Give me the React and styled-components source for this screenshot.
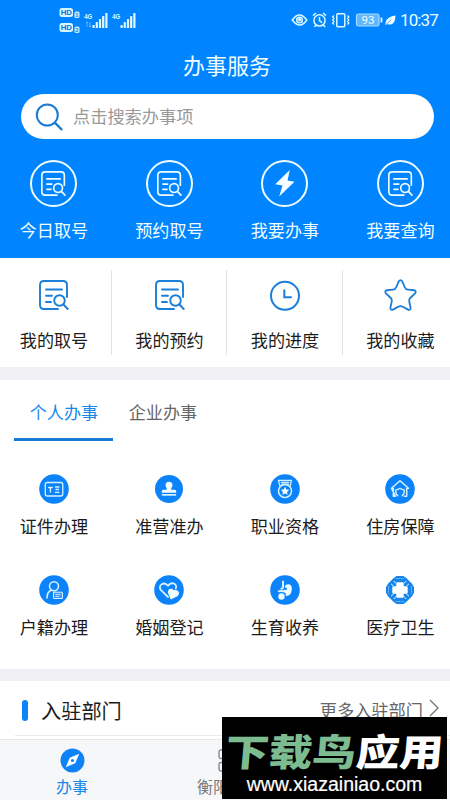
import styled, { createGlobalStyle } from "styled-components";

const GlobalStyle = createGlobalStyle`
    * {
        box-sizing: border-box;
    }

    body {
        margin: 0;
        overflow: hidden;
        background: #efeff4;
        font-family: "Noto Sans CJK SC", sans-serif;
    }

    svg {
        display: block;
        flex: none;
    }
`;

const Screen = styled.div`
    position: relative;
    width: 450px;
    height: 800px;
    overflow: hidden;
    display: flex;
    flex-direction: column;
`;

const Header = styled.header`
    height: 258px;
    flex: none;
    background: #0084ff;
    color: #effdff;
`;

const StatusBar = styled.div`
    height: 40px;
    padding: 0 12px 0 58px;
    display: flex;
    align-items: center;
    justify-content: space-between;
`;

const StatusRight = styled.div`
    display: flex;
    align-items: center;
    height: 40px;

    .time {
        font-family: Roboto, sans-serif;
        font-size: 17px;
        line-height: 20px;
        width: 38px;
        white-space: nowrap;
        letter-spacing: -0.9px;
    }
`;

const Title = styled.h1`
    margin: 0;
    height: 54px;
    padding-left: 4px;
    font-size: 22px;
    font-weight: 400;
    line-height: 49px;
    text-align: center;
`;

const SearchBox = styled.div`
    width: 413px;
    height: 45px;
    margin-left: 21px;
    padding-left: 14px;
    display: flex;
    align-items: center;
    gap: 9px;
    border-radius: 23px;
    background: white;
    color: #999;
    font-size: 17.2px;
    line-height: 44px;

    span {
        height: 45px;
    }

    svg {
        margin-top: 2px;
    }
`;

const Grid = styled.div`
    display: grid;
    grid-template-columns: repeat(4, 115.5px);
    margin-left: -4px;
    padding-top: ${(props) => props.$top}px;
`;

const Cell = styled.div`
    height: ${(props) => props.$height}px;
    display: flex;
    flex-direction: column;
    align-items: center;
    gap: ${(props) => props.$gap}px;
    padding-left: ${(props) => (props.$line ? 1.5 : 0.4)}px;
    border-right: ${(props) => (props.$line ? "1.5px solid #e3e3e6" : "none")};

    .icon {
        height: ${(props) => props.$icon}px;
        display: grid;
        place-items: center;
    }

    .label {
        font-size: 17.1px;
        line-height: 26px;
        white-space: nowrap;
    }
`;

const Ring = styled.div`
    width: 47px;
    height: 47px;
    border: 2.4px solid #effdff;
    border-radius: 50%;
    display: grid;
    place-items: center;
`;

const Panel = styled.section`
    flex: none;
    height: ${(props) => props.$height}px;
    margin-bottom: ${(props) => props.$gap}px;
    background: white;
    color: #1c1c1c;
`;

const Tabs = styled.div`
    display: flex;
    padding-left: 14.4px;
    height: 61px;
`;

const Tab = styled.div`
    width: 99px;
    height: 61px;
    text-align: center;
    font-size: 17.1px;
    line-height: 64px;
    color: ${(props) => (props.$active ? "#1787e8" : "#666")};
    border-bottom: ${(props) => (props.$active ? "3px solid #157bd6" : "none")};
`;

const Department = styled.div`
    height: 55px;
    margin-left: 15px;
    padding: 0 11px 0 7px;
    display: flex;
    align-items: center;
    border-bottom: 1px solid #ebebeb;

    .bar {
        width: 6px;
        height: 21px;
        margin-top: 4px;
        border-radius: 3px;
        background: #0d83fa;
    }

    .name {
        margin-left: 13px;
        padding-top: 5px;
        font-size: 20.2px;
        line-height: 50px;
    }

    .more {
        margin-left: auto;
        margin-right: 6px;
        padding-top: 3px;
        color: #666;
        font-size: 17.2px;
        line-height: 50px;
    }
`;

const BottomBar = styled.nav`
    height: 61px;
    flex: none;
    display: grid;
    grid-template-columns: 144px 170px 136px;
    border-top: 1px solid #e8e8ea;
    background: #f6f7f9;
`;

const BottomItem = styled.div`
    display: flex;
    flex-direction: column;
    align-items: center;
    padding-top: 7px;
    color: ${(props) => (props.$active ? "#1787e8" : "#777")};
    font-size: 16px;
    line-height: 25px;

    .glyph {
        height: 27px;
        display: grid;
        place-items: center;
    }

    .short {
        margin-right: 32px;
    }
`;

const Watermark = styled.div`
    position: absolute;
    left: 222px;
    top: 717px;
    width: 225px;
    height: 82px;
    padding-top: 13px;
    background: black;
    color: white;
    text-align: center;

    .brand {
        height: 41px;
        font-size: 42.5px;
        font-weight: 900;
        line-height: 40px;
        white-space: nowrap;
        transform: skewX(-5deg) scale(1.025, 0.88);
    }

    .brand span {
        color: #7dbb91;
    }

    .site {
        font-family: "Liberation Sans", sans-serif;
        font-size: 19.5px;
        line-height: 26px;
        -webkit-text-stroke: 0.2px white;
    }
`;

function SignalIcons() {
  return (
      <svg width="80" height="32" viewBox="0 0 80 32" fill="none">
          {[3, 18].map((y, i) => (
              <g key={y}>
                  <rect x="1.5" y={y + 1} width="13.5" height="9" rx="2.5" fill="#d5f5ff" />
                  <text x="2.7" y={y + 8.3} fontFamily="Liberation Sans" fontWeight="700" fontSize="7.8" fill="#0878e0">HD</text>
                  <rect x="16.5" y={y + 4.5} width="5" height="6.5" rx="1.5" fill="#c2edff" />
                  <text x="17.5" y={y + 9.8} fontFamily="Liberation Sans" fontWeight="700" fontSize="5" fill="#0878e0">{i + 1}</text>
              </g>
          ))}
          {[27, 55].map((x) => (
              <g key={x}>
                  <text x={x - 0.8} y="14.5" fontFamily="Liberation Sans" fontWeight="700" fontSize="7.5" textLength="8" lengthAdjust="spacingAndGlyphs" fill="#e0f9ff">4G</text>
                  {[0, 1, 2, 3, 4].map((n) => (
                      <rect key={n} x={x + 7.5 + n * 3.2} y={21 - n * 3} width="2.2" height={3 + n * 3} rx="0.6" fill="#e0f9ff" />
                  ))}
              </g>
          ))}
          <path d="M29 18v5m-1-3.8 1-1.4 1 1.4m2-1.2v5m-1-1.3 1 1.4 1-1.4" stroke="#72c4ff" strokeWidth="0.8" />
      </svg>
  );
}

function StatusIcons() {
  return (
      <svg width="110" height="24" viewBox="290 8 110 24" fill="none" stroke="#dcfaff" strokeWidth="1.5">
          <path d="M292.3 20q7-10 14.5 0-7 10-14.5 0Z" />
          <circle cx="299.5" cy="20" r="2.8" />
          <circle cx="299.5" cy="19.6" r="0.9" fill="#dcfaff" />
          <circle cx="319.5" cy="20.4" r="5.6" />
          <path d="M319.5 17v3.7l2.5 2m-9-7.1 3-2.6m10 2.6-3-2.6m-7 12-1.5 2m9-2 1.5 2" />
          <rect x="336.8" y="13.7" width="8" height="13" rx="1" />
          <path d="M334 15.5l-1.4 1.5 1.4 1.5-1.4 1.5 1.4 1.5-1.4 1.5 1.4 1.5m13.5-9 1.4 1.5-1.4 1.5 1.4 1.5-1.4 1.5 1.4 1.5-1.4 1.5" strokeWidth="1.2" />
          <rect x="356.5" y="14" width="22.5" height="12" rx="1.8" fill="#62b6ff" stroke="#a5dcff" strokeWidth="1.2" />
          <path d="M381.5 17.5v5" strokeWidth="1.8" />
          <text x="361.5" y="24.3" fontFamily="Roboto" fontSize="11.5" fill="#effdff" stroke="none">93</text>
          <path d="M385.4 25.5c0-6 2.5-8.5 10-10 .3 7-3.3 10.5-8.5 8.5Z" fill="#effdff" stroke="none" />
          <path d="m386 24.5 5.2-4.7" stroke="#0084ff" strokeWidth="0.7" />
      </svg>
  );
}

function DocSearchIcon({ size = 30, color = "#1b7ed8", weight = 1.9 }) {
  return (
      <svg width={size} height={size} viewBox="0 0 30 30" fill="none" stroke={color} strokeWidth={weight} strokeLinecap="round">
          <path d="M28 17V5q0-4-4-4H5Q1 1 1 5v20q0 4 4 4h14" />
          <path d="M7 9.5h16M7 15.7h6M7 22h5" />
          <circle cx="20.5" cy="20.5" r="5.3" />
          <path d="m24.5 24.5 4.2 4.5" />
      </svg>
  );
}

function BoltIcon() {
  return (
      <svg width="22" height="29" viewBox="0 0 22 29">
          <path d="M15.8 1 1.2 15.2l7.3 1.2L5.2 27.5 20.5 12.8l-7-1.3L15.8 1Z" fill="#f6ffff" />
      </svg>
  );
}

function ClockIcon() {
  return (
      <svg width="32" height="32" viewBox="0 0 32 32" fill="none" stroke="#1b7ed8" strokeWidth="2">
          <circle cx="16" cy="16.8" r="14" />
          <path d="M15.3 11.3v7H22" strokeLinecap="round" />
      </svg>
  );
}

function StarIcon() {
  return (
      <svg width="33" height="33" viewBox="0 0 34 34" fill="none" stroke="#1b7ed8" strokeWidth="1.9" strokeLinejoin="round">
          <path d="M15.2 2.4q1.8-2.4 3.6 0l2.6 6.1q.9 2.3 3.3 2.5l6.3.6q2.8.7 1 3.2l-5 4.8q-1.4 1.4-1 3.4l1.4 6.5q.2 3-2.6 2.1l-5.4-3q-2.4-1.4-4.8 0l-5.4 3q-2.8.9-2.6-2.1L8 23q.4-2-1-3.4l-5-4.8q-1.8-2.5 1-3.2l6.3-.6q2.4-.2 3.3-2.5Z" />
      </svg>
  );
}

function ServiceIcon({ children, r = 14.8 }) {
  return (
      <svg width="30" height="30" viewBox="0 0 30 30" fill="none" stroke="#d5f2ff" strokeWidth="1.3" strokeLinecap="round" strokeLinejoin="round">
          <circle cx="15" cy="15" r={r} fill="#0d83fa" stroke="none" />
          {children}
      </svg>
  );
}

function MedicalIcon() {
  return (
      <svg width="30" height="30" viewBox="0 0 30 30" fill="none">
          <path d="M11.5 1h7l3 2.2 5.3 5.3L29 12v6l-2.2 3.5-5.3 5.3-3 2.2h-7l-3-2.2-5.3-5.3L1 18v-6l2.2-3.5 5.3-5.3Z" fill="#1686ec" />
          <path d="M12.5 7.3h5q1.2 0 1.2 1.3v2.7h2.7q1.3 0 1.3 1.2v5q0 1.2-1.3 1.2h-2.7v2.7q0 1.3-1.2 1.3h-5q-1.2 0-1.2-1.3v-2.7H8.6q-1.3 0-1.3-1.2v-5q0-1.2 1.3-1.2h2.7V8.6q0-1.3 1.2-1.3Z" fill="white" />
          <path d="m8.8 6 2.3 2.6M6 8.8l2.6 2.3M21.2 6l-2.3 2.6M24 8.8l-2.6 2.3M8.8 24l2.3-2.6M6 21.2l2.6-2.3M21.2 24l-2.3-2.6m5.1-.2-2.6-2.3" stroke="white" strokeWidth="0.9" />
          <path d="M11 3.5h8m-8 23h8M3.5 11v8m23-8v8" stroke="#a9d7ff" strokeWidth="0.7" strokeDasharray="1.6 0.8" />
      </svg>
  );
}

const quickIcon = <DocSearchIcon size={25} color="#effdff" weight={2} />;

const quickEntries = [
  { label: "今日取号", icon: quickIcon },
  { label: "预约取号", icon: quickIcon },
  { label: "我要办事", icon: <BoltIcon /> },
  { label: "我要查询", icon: quickIcon },
];

const myEntries = [
  { label: "我的取号", icon: <DocSearchIcon /> },
  { label: "我的预约", icon: <DocSearchIcon /> },
  { label: "我的进度", icon: <ClockIcon /> },
  { label: "我的收藏", icon: <StarIcon /> },
];

const services = [
  {
    label: "证件办理",
    icon: (
        <ServiceIcon>
            <rect x="6.3" y="8.5" width="17.5" height="13.5" rx="2" />
            <path d="M9.5 13.5h3.8m-1.9 0v4.5m5-5h3.6m-3 2.5h2.5m-3.1 2.8H20" />
        </ServiceIcon>
    ),
  },
  {
    label: "准营准办",
    icon: (
        <ServiceIcon r={14}>
            <path d="M12.8 15.7c.4-1.8-1.3-2.5-1.3-4.5a3.5 3.5 0 0 1 7 0c0 2-1.7 2.7-1.3 4.5h3.5q1.5 0 1.5 1.5v1.5H7.8v-1.5q0-1.5 1.5-1.5Z" fill="#effdff" stroke="none" />
            <path d="M8.5 20.8h13" strokeWidth="1.7" />
        </ServiceIcon>
    ),
  },
  {
    label: "职业资格",
    icon: (
        <ServiceIcon>
            <path d="M8.5 6.3h13l-1.2 5.2m-10.6 0L8.5 6.3m2.8 2.2h7.5m-7 2h6.4" />
            <circle cx="15" cy="17" r="6.5" strokeWidth="1.5" />
            <path d="m15 12.8 1.3 2.6 2.9.4-2.1 2.1.5 2.9-2.6-1.4-2.6 1.4.5-2.9-2.1-2.1 2.9-.4Z" fill="#effdff" stroke="none" />
        </ServiceIcon>
    ),
  },
  {
    label: "住房保障",
    icon: (
        <ServiceIcon>
            <path d="M6.5 14.3 15 6.8l8.5 7.5h-1.8v8h-2.3m-8.8 0H8.3v-8H6.5Z" strokeWidth="1.5" />
            <path d="M12.8 21.8c-2-1.5-2.3-3-2-6 2 0 2.8-.5 4.2-1.5 1.4 1 2.2 1.5 4.2 1.5.3 3 0 4.5-2 6" />
        </ServiceIcon>
    ),
  },
  {
    label: "户籍办理",
    icon: (
        <ServiceIcon>
            <circle cx="15" cy="11.3" r="4.5" strokeWidth="1.6" />
            <path d="M8 23q0-6.5 4.7-8" strokeWidth="1.6" />
            <rect x="14.5" y="17.2" width="9" height="6.3" rx="0.5" strokeWidth="1" fill="#3d9dfb" />
            <path d="M17 19.4h4m-4 2h2.5" strokeWidth="0.8" />
        </ServiceIcon>
    ),
  },
  {
    label: "婚姻登记",
    icon: (
        <ServiceIcon>
            <path d="M14 22 7 15.2c-3.7-4.5 2.8-9.6 7-4.4 4-5.2 10-1 7.7 2.6" strokeWidth="1.8" />
            <path d="m16.8 24.5-2.6-6c-1.4-4 3-6.3 5.4-3.2 4.1-1.4 7.6 2.8 3.8 5.9Z" fill="#effdff" stroke="none" />
        </ServiceIcon>
    ),
  },
  {
    label: "生育收养",
    icon: (
        <ServiceIcon>
            <circle cx="11.5" cy="21.5" r="3.2" fill="#effdff" stroke="none" />
            <path d="M13 6.5v5.2q0 2-1.7 2M8.8 16.3q4-1 6.5.7" strokeWidth="2" />
            <path d="M14.8 11.2q1.2-2.4 4-2 3.3.6 3 4.8-.2 5.8-4.5 7-2.2.2-1.6-2.7l-2.5-2.8q2.4-.4 1.6-4.3Z" fill="#effdff" stroke="none" />
            <circle cx="15.8" cy="13.8" r="1.2" fill="#0d83fa" stroke="none" />
        </ServiceIcon>
    ),
  },
  { label: "医疗卫生", icon: <MedicalIcon /> },
];

export default function App() {
  return (
      <Screen>
          <GlobalStyle />
          <Header>
              <StatusBar>
                  <SignalIcons />
                  <StatusRight>
                      <StatusIcons />
                      <span className="time">10:37</span>
                  </StatusRight>
              </StatusBar>
              <Title>办事服务</Title>
              <SearchBox>
                  <svg width="29" height="29" viewBox="0 0 29 29" fill="none" stroke="#197bd4" strokeWidth="2">
                      <circle cx="12.3" cy="12" r="10.5" />
                      <path d="m19.8 19.7 7.3 7.3" strokeWidth="2.4" />
                  </svg>
                  <span>点击搜索办事项</span>
              </SearchBox>
              <Grid $top={21}>
                  {quickEntries.map((item) => (
                      <Cell key={item.label} $height={90} $icon={47} $gap={10}>
                          <div className="icon"><Ring>{item.icon}</Ring></div>
                          <span className="label">{item.label}</span>
                      </Cell>
                  ))}
              </Grid>
          </Header>
          <Panel $height={109} $gap={13}>
              <Grid $top={12}>
                  {myEntries.map((item, i) => (
                      <Cell key={item.label} $height={85} $icon={50} $gap={7} $line={i < 3}>
                          <div className="icon">{item.icon}</div>
                          <span className="label">{item.label}</span>
                      </Cell>
                  ))}
              </Grid>
          </Panel>
          <Panel $height={289} $gap={12}>
              <Tabs>
                  <Tab $active>个人办事</Tab>
                  <Tab>企业办事</Tab>
              </Tabs>
              <Grid $top={26}>
                  {services.map((item) => (
                      <Cell key={item.label} $height={101} $icon={44} $gap={2}>
                          <div className="icon">{item.icon}</div>
                          <span className="label">{item.label}</span>
                      </Cell>
                  ))}
              </Grid>
          </Panel>
          <Panel $height={58} $gap={0}>
              <Department>
                  <div className="bar" />
                  <span className="name">入驻部门</span>
                  <span className="more">更多入驻部门</span>
                  <svg width="10" height="18" viewBox="0 0 10 18" fill="none" stroke="#777" strokeWidth="1.4">
                      <path d="m1 1 8 8-8 8" />
                  </svg>
              </Department>
          </Panel>
          <BottomBar>
              <BottomItem $active>
                  <div className="glyph">
                      <svg width="25" height="25" viewBox="0 0 25 25">
                          <circle cx="12.5" cy="12.5" r="12" fill="#0d83fa" />
                          <path d="M19.3 5.7 15.2 15.2 5.7 19.3 9.8 9.8Z" fill="white" />
                          <circle cx="12.5" cy="12.5" r="1.6" fill="#0d83fa" />
                      </svg>
                  </div>
                  <span>办事</span>
              </BottomItem>
              <BottomItem>
                  <div className="glyph">
                      <svg width="23" height="23" viewBox="0 0 23 23" fill="none" stroke="#888" strokeWidth="1.4">
                          <rect x="1" y="1" width="8.5" height="8.5" rx="2" />
                          <rect x="13.5" y="1" width="8.5" height="8.5" rx="2" />
                          <rect x="1" y="13.5" width="8.5" height="8.5" rx="2" />
                          <rect x="13.5" y="13.5" width="8.5" height="8.5" rx="2" />
                      </svg>
                  </div>
                  <span className="short">衡阳</span>
              </BottomItem>
          </BottomBar>
          <Watermark>
              <div className="brand"><span>下载鸟</span>应用</div>
              <div className="site">www.xiazainiao.com</div>
          </Watermark>
      </Screen>
  );
}
